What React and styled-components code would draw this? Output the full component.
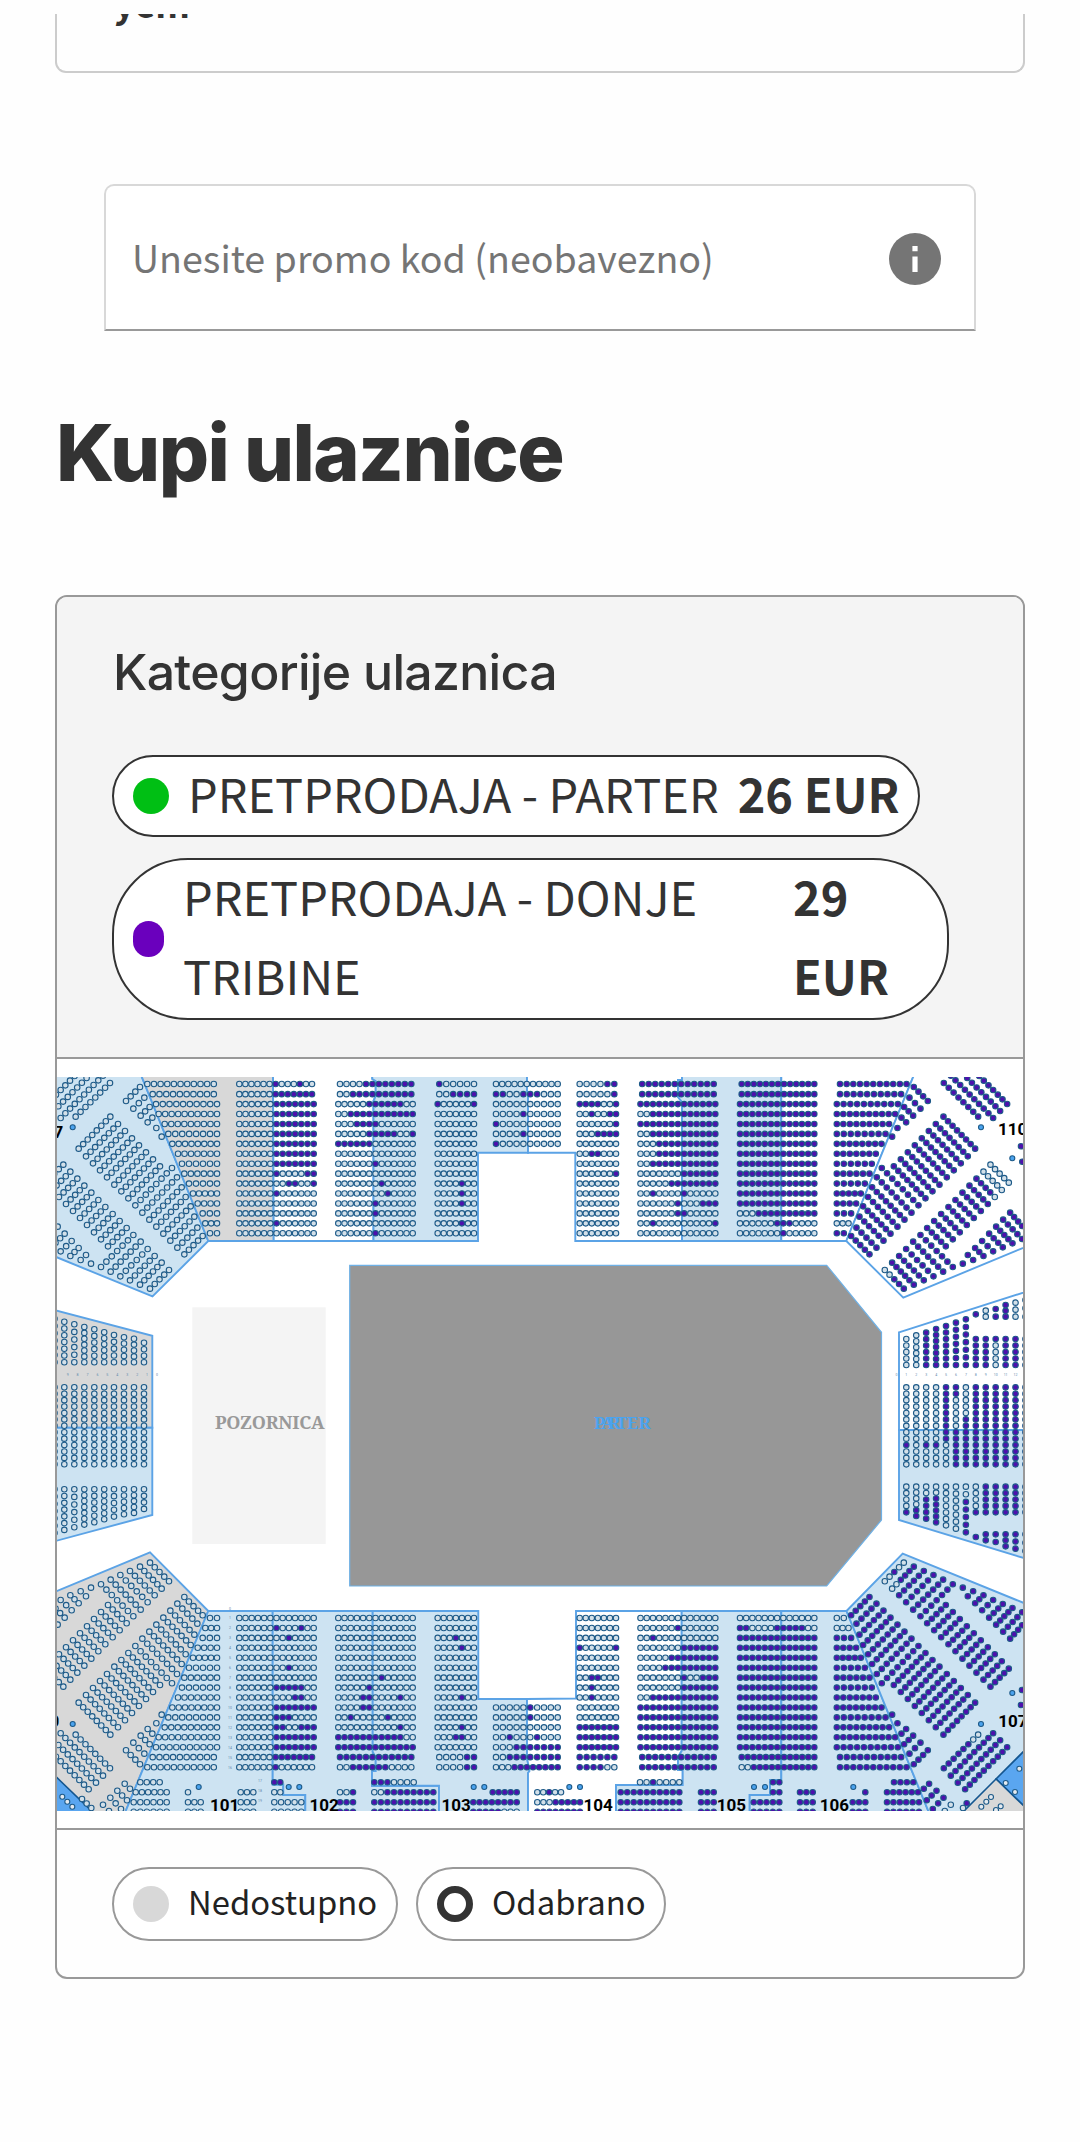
import React from "react";
import styled, { createGlobalStyle } from "styled-components";

const sans = `"Noto Sans CJK SC", "Noto Sans", sans-serif`;

// mirror axes of the arena (x sum and y sum of two mirrored points)
const AX = 1053.8;
const AY = 2851.3;
const ROW = 9.94;

const O = "o";
const X = "x";
const all = (c, n) => c.repeat(n);
// n open seats with the listed indexes taken
const at = (n, ...idx) =>
  Array.from({ length: n }, (_, i) => (idx.includes(i) ? X : O)).join("");

const line = (x1, y1, x2, y2, pattern) => {
  const n = pattern.length;
  return pattern.split("").map((c, i) => {
    const t = n > 1 ? i / (n - 1) : 0;
    return { x: x1 + (x2 - x1) * t, y: y1 + (y2 - y1) * t, on: c === X };
  });
};

// straight blocks, rows listed from the outer edge towards the floor
const o13 = all(O, 13);
const x13 = all(X, 13);
const x12 = all(X, 12);
const o7 = all(O, 7);
const x7 = all(X, 7);
const left = (p) => all(O, 6) + p;

const blocks = [
  {
    x: [239.3, 313.7],
    edge: [239.3, 312],
    top: [
      "xoooxoo", x7, x7, x7, x7, x7, x7, x7, x7, "xooooxx", "ooxxoox",
      "xoooooo", o7, o7, "xoooooo", o7,
    ].map(left),
    bottom: [
      "xoooooo", x7, x7, x7, "xxooxxx", "xxxoooo", x7, "oooxxoo", "xxxxxoo",
      o7, "ooxoooo", o7, o7, "ooxoooo", "xoooxoo", o7,
    ].map(left),
  },
  {
    x: [338.3, 412.7],
    edge: [340, 411.3],
    top: [
      "ooooxxxxxxxx", "ooxxxxxxxxxx", "oooooxxxxxxoo", "ooxxxxxxxxxxx",
      "oooxxxxoooooo", "oooooxxxxxoox", "xxxxxxooooooo", o13, at(13, 6), o13,
      at(13, 7), at(13, 8), at(13, 6), at(13, 6), o13, at(13, 6),
    ],
    bottom: [
      "ooxxxxxxoooo", x12, x13, "xxxxxxxxxxxoo", at(13, 10), at(13, 2, 8),
      at(13, 4, 5), at(13, 4, 5, 10), at(13, 5), at(13, 7), o13, o13, o13,
      o13, o13, o13,
    ],
  },
  {
    x: [437.7, 474],
    edge: [439.3, 474],
    top: [
      "xooooo", "ooxxxx", "xooooox", o7, o7, o7, o7, o7, o7, o7, at(7, 4),
      at(7, 4), at(7, 4), o7, at(7, 4), o7,
    ],
    bottom: [
      "ooooxx", "ooooxx", o7, at(7, 3, 4), at(7, 4), o7, o7, at(7, 4), o7, o7,
      o7, o7, at(7, 4), at(7, 3), o7, o7,
    ],
  },
  {
    x: [496, 557.7],
    edge: [496, 557.7],
    top: [
      all(O, 11), "xxooxxxooo", all(O, 10), at(10, 4), at(10, 0), at(10, 4),
      at(10, 0),
    ],
    bottom: [
      "oooxxxxxxxx", "ooxxxxxxxx", "oooxxxxxxx", at(10, 2, 6), all(O, 10),
      at(10, 5), at(10, 5),
    ],
  },
  {
    x: [579.7, 616],
    edge: [579.7, 614.3],
    top: [
      "ooooxx", "ooooox", "xxxxoox", "ooxooxx", "oooooox", "oooxxxx", o7,
      "ooxxooo", o7, "oooooox", o7, o7, o7, o7, o7, o7,
    ],
    bottom: [
      "xxxxoo", "xxxxxx", x7, x7, x7, o7, o7, "ooxoooo", "ooxoooo", "ooxxooo",
      o7, o7, "xooooox", o7, o7, o7,
    ],
  },
  {
    x: [640.5, 715.3],
    edge: [642.2, 713.7],
    top: [
      x12, x12, x13, "ooxxxxxxxxxxx", x13, "ooxxxxxxxxxxx", "oooxxxxxxxxxx",
      "oooxxxxxxxxxx", "ooxxxxxxxxxxx", "oooooooxxxxxx", "oooooxxxxxxxx",
      at(13, 2, 7), "ooooooxoooxxx", at(13, 6, 7), at(13, 2, 12), o13,
    ],
    bottom: [
      x12, x12, x13, x13, x13, x13, x13, "ooxxxxxxxxxxx", "oooooooxxxxxx",
      "oooooooxooxxx", "ooooxxxxxxxxx", "oooooxxxxxxxx", "oooooooxxxxxx",
      at(13, 2), at(13, 6), o13,
    ],
  },
  {
    x: [740, 814.3],
    edge: [741.7, 814.3],
    top: [
      x13, x13, x13, x13, x13, x13, x13, x13, x13, x13, x13, x13, x13,
      "oooxxxxxxxxxx", "ooooooxxxoooo", at(13, 7),
    ],
    bottom: [
      "ooxxxxxxxxxxx", x13, x13, x13, x13, x13, x13, x13, x13, x13, x13, x13,
      x13, x13, "xxooooxxxxxoo", o13,
    ],
  },
];

const seats = [];
const add = (...args) => seats.push(...line(...args));
const rowY = (i) => 1084 + i * ROW + (i > 0 ? 0.2 : 0);

blocks.forEach((b) => {
  ["top", "bottom"].forEach((side) => {
    b[side].forEach((pattern, i) => {
      const [x1, x2] = i < 2 ? b.edge : b.x;
      const y = side === "top" ? rowY(i) : AY - rowY(i);
      add(x1, y, x2, y, pattern);
    });
  });
});

// tapering blocks next to the corners: start x and seat count per row
const taper = [
  [147.3, 11], [152.7, 10], [156, 10], [158.7, 10], [164.7, 9], [168.3, 8],
  [172.3, 8], [178, 7], [182, 6], [184.3, 6], [189, 5], [193, 5], [197.7, 4],
  [202.7, 3], [205.3, 3], [210, 2],
];
taper.forEach(([x, n], i) => {
  const end = i < 2 ? 213.8 : 217;
  const y = rowY(i);
  add(x, y, end, y, all(O, n));
  add(x, AY - y, end, AY - y, all(O, n));
  add(AX - x, y, AX - end, y, all(i === 14 ? O : X, n));
  add(AX - x, AY - y, AX - end, AY - y, all(i > 13 ? O : X, n));
});

// outer rows cut by the lower edge of the map
const outer = [
  [1782.3, 140.3, 159.7, "oooo"],
  [1782.3, 274.3, 280.3, "xx"],
  [1782.3, 374.3, 413.7, "xxxoooo"],
  [1782.3, 640, 679.3, "ooxoooo"],
  [1782.3, 773, 779.3, "xx"],
  [1782.3, 894, 913.3, "xxxx"],
  [1792.3, 135.7, 166.7, "oooooo"],
  [1792.3, 188, 188, "o"],
  [1792.3, 240.7, 253.3, "ooo"],
  [1792.3, 274.3, 280.3, "oo"],
  [1792.3, 340, 353, "oox"],
  [1792.3, 374.3, 433.3, "ooxxxxxxxx"],
  [1792.3, 492.7, 516.7, "xxxxx"],
  [1792.3, 537.3, 561, "ooxoo"],
  [1792.3, 620.7, 679.3, "xxxxxxxxxx"],
  [1792.3, 701, 713.7, "xxx"],
  [1792.3, 773, 779.3, "xx"],
  [1792.3, 800, 812.7, "xxx"],
  [1792.3, 865.3, 865.3, "x"],
  [1792.3, 887, 918, "xxxxxx"],
];
[1802.3, 1811.8].forEach((y, i) => {
  outer.push(
    [y, 133.7, 166.7, "oooooo"],
    [y, 188, 200.7, "ooo"],
    [y, 240.7, 253.3, "ooo"],
    [y, 274.3, 301.3, "ooooo"],
    [y, 340, 353, "xxx"],
    [y, 374.3, 433.3, "xxxxxxxxxx"],
    [y, 473.3, 516.7, i ? "xxxxxooo" : "xxxxxxxx"],
    [y, 537.3, 580, i ? "xxxxxxxx" : "oooxxxxx"],
    [y, 620.7, 679.3, "xxxxxxxxxx"],
    [y, 701, 713.7, "xxx"],
    [y, 753.7, 779.3, "xxxxx"],
    [y, 800, 812.7, "xxx"],
    [y, 852.7, 865.3, "xxx"],
    [y, 887, 919, "xxxxxx"]
  );
});
outer.forEach(([y, x1, x2, p]) => add(x1, y, x2, y, p));

// corner rows, drawn in a grid three times finer than the map with its origin at 50,1060
// [x1, y1, x2, y2, count, pattern top right, pattern bottom right]
const corner = [
  [181, 170, 86, 266, 8], [204, 192, 108, 289, 8], [225, 213, 129, 310, 8],
  [246, 235, 150, 331, 8], [267, 256, 171, 352, 8], [288, 277, 193, 374, 8],
  [309, 298, 214, 394, 8], [330, 319, 235, 415, 8], [366, 324, 256, 436, 8],
  [381, 352, 277, 458, 8], [395, 382, 298, 479, 8], [407, 411, 319, 500, 7],
  [422, 439, 340, 521, 7], [433, 470, 361, 542, 6], [442, 503, 382, 563, 5],
  [458, 528, 403, 583, 5],
  [270, 81, 228, 123, 4], [283, 113, 250, 146, 3], [299, 141, 272, 167, 3],
  [307, 173, 293, 187, 2], [319, 204, 319, 204, 1], [335, 230, 335, 230, 1],
  [77, 170, 180, 69, 8, null, "ooxxxxxx"], [32, 174, 159, 47, 10],
  [11, 153, 138, 26, 10], [-10, 132, 116, 6, 10],
  [40, 314, -15, 368, 5, "ooooo"], [61, 335, 6, 390, 5, "ooooo"],
  [82, 356, 27, 411, 5, "xxxxo"], [103, 377, 48, 432, 5],
  [124, 398, 69, 453, 5], [145, 420, 90, 474, 5], [166, 441, 111, 495, 5],
  [188, 462, 132, 517, 5], [209, 483, 153, 538, 5], [230, 504, 174, 559, 5],
  [250, 525, 153, 621, 7], [272, 545, 182, 635, 7], [293, 567, 211, 649, 6],
  [314, 588, 240, 661, 6], [335, 608, 270, 674, 6, null, "ooxxxx"],
  [357, 630, 300, 686, 5, "ooxxx", "ooxoo"],
  [123, 611, 123, 611, 1], [108, 585, 92, 600, 2], [86, 564, 61, 588, 3],
  [65, 543, 32, 574, 3], [44, 521, 3, 562, 4], [23, 500, -26, 550, 5],
  [2, 479, -55, 537, 5], [-19, 458, -55, 498, 4],
];
corner.forEach(([x1, y1, x2, y2, n, tr, br]) => {
  const a = [50 + x1 / 3, 1060 + y1 / 3];
  const b = [50 + x2 / 3, 1060 + y2 / 3];
  add(a[0], a[1], b[0], b[1], all(O, n));
  add(a[0], AY - a[1], b[0], AY - b[1], all(O, n));
  add(AX - a[0], a[1], AX - b[0], b[1], tr || all(X, n));
  add(AX - a[0], AY - a[1], AX - b[0], AY - b[1], br || all(X, n));
});
[
  [124.7, 1783.7, 130, 1788.7, 2], [117.3, 1790.7, 127, 1800.3, 3],
  [110.3, 1797.7, 121, 1809, 3], [103, 1804.7, 109, 1811, 2],
].forEach(([x1, y1, x2, y2, n]) => {
  add(x1, y1, x2, y2, all(O, n));
  add(AX - x1, y1, AX - x2, y2, all(n === 2 && y1 > 1800 ? O : X, n));
});
add(82, 1799, 91.3, 1808, "ooo");
add(966.7, 1803.3, 963, 1808, "xo");
add(1021, 1146.3, 1022.3, 1161.7, "xx");
add(1022, 1690, 1021, 1705, "xx");

// end blocks, column by column
const leftCols = [
  [54.5, 1318.7, 7], [64.3, 1321.7, 7], [74.3, 1324.3, 6], [84.3, 1327, 7],
  [94.3, 1329.3, 6], [104.2, 1332.3, 6], [114, 1335, 5], [124, 1337.3, 5],
  [134, 1338.7, 5], [144, 1342.7, 4],
];
leftCols.forEach(([x, y, n]) => {
  add(x, y, x, 1362.3, all(O, n));
  add(x, 1387.3, x, 1464.3, o13);
  add(x, 1489.3, x, AY + 0.3 - y, all(O, n));
});

const rightCols = [
  ["ooooo", 147, at(13, 9), "oooox", 667],
  ["oooooo", 136, o13, "ooooxx", 678],
  ["xxxxxx", 128, at(13, 9), "ooxxxx", 686],
  ["xxxxxxx", 117, at(13, 9), "ooxxxxx", 697],
  ["xxxxxxx", 108, "xxxxxxxxxoooo", "ooooooo", 706],
  ["xxxxxxx", 98, "xxoooooxxxxxx", "ooooooo", 716],
  ["xxxxxxx", 88, "oooooxxxxxxxx", "ooxxxxx", 727],
  ["xxxxx", 147, x13, "oooox", 667, [73, 73, "x"], [741, 741, "x"]],
  ["xxxxx", 147, x13, "xxxxx", 667, [62, 80, "oo"], [733, 751, "xx"]],
  ["xoooo", 147, x13, "xxxxx", 667, [57, 80, "xx"], [733, 756, "xx"]],
  ["xxxxx", 147, x13, "xxxxx", 667, [45, 80, "xxx"], [733, 769, "xxx"]],
  ["xxxxx", 147, x13, "xxxxx", 667, [38, 80, "ooo"], [733, 776, "xxx"]],
  ["xxxxx", 147, x13, "xxxxx", 667, [30, 80, "ooo"], [733, 783, "xxx"]],
];
rightCols.forEach(([up, y1, mid, low, y2, ...extra], i) => {
  const x = 906.3 + i * 9.93;
  const y = (v) => 1290 + v / 3;
  add(x, y(y1), x, y(225), up);
  add(x, y(292), x, y(523), mid);
  add(x, y(590), x, y(y2), low);
  extra.forEach(([a, b, p]) => add(x, y(a), x, y(b), p));
});

const boxSeats = [
  [62.3, 1796.7], [67.3, 1801.7], [72.3, 1806.7], [991, 1797], [986.3, 1801.7],
  [981.3, 1806.7], [1000.7, 1806.3], [996, 1810], [1005.7, 1783],
  [1015, 1792], [1019.3, 1768.7],
];

const markers = [
  [72.7, 1127.3], [981, 1127.3], [1012.3, 1158.3], [72.7, 1724],
  [981, 1724], [1012.3, 1693], [198.7, 1787], [288.7, 1787], [299.3, 1787],
  [473.7, 1787], [484.3, 1787], [569.3, 1787], [580, 1787], [754, 1787],
  [765, 1787], [853.3, 1787],
];

const blue = "#cde3f2";
const grey = "#d8d8d8";
const sections = [
  ["50,1070 139,1070 208.3,1241 152.5,1296.5 50,1254.5", blue],
  ["139,1070 273,1070 273.7,1241 208.3,1241", grey],
  ["273,1070 372,1070 372.3,1079 375.7,1081 375.7,1096 373.5,1101 373.5,1241 273.7,1241", "#fff"],
  ["372,1070 527,1070 527,1090 528,1094 528,1152.7 478,1152.7 478,1241 373.5,1241 373.5,1101 375.7,1096 375.7,1081 372.3,1079", blue],
  ["527,1070 682,1070 682,1080 678,1080 678,1097 682,1102 682,1241 575.3,1241 575.3,1152.7 528,1152.7 528,1094 527,1090", "#fff"],
  ["682,1070 781.3,1070 781.3,1241 682,1241 682,1102 678,1097 678,1080 682,1080", blue],
  ["781.3,1070 916,1070 846.3,1241 781.3,1241", "#fff"],
  ["916,1070 1030,1070 1030,1245 903.3,1297.6 846.3,1241", "#fff"],
  ["50,1309 152.3,1335.8 152.3,1427.7 50,1427.7", grey],
  ["50,1427.7 152.3,1427.7 152.3,1515 50,1542.5", blue],
  ["899,1332.3 1030,1290.5 1030,1430 899,1430", "#fff"],
  ["899,1430 1030,1430 1030,1560 899,1520", blue],
  ["50,1594 150,1552.3 208.3,1611 122,1820 50,1820", grey],
  ["208.3,1611 272.7,1611 272.7,1784.5 283.3,1784.5 283.3,1795 305.3,1795 305.3,1820 122,1820", blue],
  ["272.7,1611 372.7,1611 372.7,1752 375.7,1757 375.7,1771 372,1771 372,1785.7 439,1785.7 439,1820 305.3,1820 305.3,1795 283.3,1795 283.3,1784.5 272.7,1784.5", blue],
  ["372.7,1611 478.3,1611 478.3,1699 527,1699 527,1758 529.5,1771 528,1773 528,1820 439,1820 439,1785.7 372,1785.7 372,1771 375.7,1771 375.7,1757 372.7,1752", blue],
  ["576,1611 681.7,1611 681.7,1751 678,1757 678,1770 682.7,1770 682.7,1785 616,1785 616,1820 528,1820 528,1773 529.5,1771 527,1758 527,1699 576,1698.5", "#fff"],
  ["681.7,1611 781.3,1611 781.3,1780 770,1780 770,1795 749.7,1795 749.7,1820 616,1820 616,1785 682.7,1785 682.7,1770 678,1770 678,1757 681.7,1751", blue],
  ["781.3,1611 846.5,1611 932,1820 749.7,1820 749.7,1795 770,1795 770,1780 781.3,1780", blue],
  ["846.5,1611 902.7,1553.6 1030,1605.5 1030,1820 932,1820", blue],
];

const labels = [
  [34, 1138, "117"], [998, 1134.8, "110"], [998.3, 1726.7, "107"],
  [30, 1726.7, "100"], [210, 1811.3, "101"], [309.5, 1811.3, "102"],
  [441.5, 1811.3, "103"], [583.5, 1811.3, "104"], [716.7, 1811.3, "105"],
  [819.7, 1811.3, "106"],
];

const ArenaMap = () => (
  <Map viewBox="57 1077 966 734" width="966" height="734">
    {sections.map(([points, fill]) => (
      <polygon key={points} points={points} fill={fill} stroke="#5ba3e6" strokeWidth="1.9" />
    ))}
    <g stroke="#14568f" strokeWidth="1.6">
      <polygon points="50,1771 101,1820 50,1820" fill="#5aa6f0" />
      <polygon points="1030,1745 996,1779 1030,1812" fill="#5aa6f0" />
      <polygon points="996,1779 955,1820 1030,1820 1030,1812" fill={grey} />
    </g>
    <rect x="192.3" y="1307.3" width="133.4" height="236.7" fill="#f4f4f4" />
    <StageText x="215" y="1428.7" textLength="109.5">POZORNICA</StageText>
    <polygon
      points="349.7,1265.3 826.7,1265.3 881.5,1332.3 881.5,1520 826.7,1586 349.7,1586"
      fill="#979797"
      stroke="#6fb1e6"
      strokeWidth="1.2"
    />
    <FloorText x="594 601 608 616 627 638.5" y="1429.3">PARTER</FloorText>
    <g stroke="#1d5a88" strokeWidth="1.1">
      {seats.map((s, i) => (
        <circle key={i} cx={s.x} cy={s.y} r="2.75" fill={s.on ? "#4d10ad" : "#d3e0e9"} />
      ))}
      {boxSeats.map(([x, y]) => (
        <circle key={x} cx={x} cy={y} r="2.5" fill="#e4eaf0" />
      ))}
      {markers.map(([x, y]) => (
        <circle key={`${x}-${y}`} cx={x} cy={y} r="2.5" fill="#4ba3ee" />
      ))}
    </g>
    {Array.from({ length: 17 }, (_, i) => (
      <RowText key={i} x="230" y={1609.5 + i * ROW}>{i}</RowText>
    ))}
    {[17, 18, 19].map((n, i) => (
      <RowText key={n} x="260" y={1781.5 + i * 10}>{n}</RowText>
    ))}
    {Array.from({ length: 10 }, (_, i) => (
      <RowText key={i} x={157 - i * 9.93} y="1375.7">{i}</RowText>
    ))}
    {Array.from({ length: 13 }, (_, i) => (
      <RowText key={i} x={896.4 + i * 9.93} y="1375.7">{i}</RowText>
    ))}
    {labels.map(([x, y, text]) => (
      <SectionText key={text} x={x} y={y}>{text}</SectionText>
    ))}
  </Map>
);

export default function App() {
  return (
    <Page>
      <GlobalStyle />
      <Notice>
        <p>yem</p>
      </Notice>
      <PromoField>
        <span>Unesite promo kod (neobavezno)</span>
        <svg viewBox="0 0 52 52" width="52" height="52">
          <circle cx="26" cy="26" r="26" fill="#757575" />
          <path d="M23.4 13h5.2v5.2h-5.2zM23.4 23.4h5.2V39h-5.2z" fill="#fff" />
        </svg>
      </PromoField>
      <Heading>Kupi ulaznice</Heading>
      <Panel>
        <Categories>
          <h2>Kategorije ulaznica</h2>
          <Category>
            <Dot $color="#00bf14" />
            <span>PRETPRODAJA - PARTER</span>
            <strong>26 EUR</strong>
          </Category>
          <Category $wide>
            <Dot $color="#6a00bd" $width={31} />
            <span>PRETPRODAJA - DONJE TRIBINE</span>
            <strong>29 EUR</strong>
          </Category>
        </Categories>
        <MapArea>
          <ArenaMap />
        </MapArea>
        <Legend>
          <LegendItem $width={286}>
            <Dot $color="#d8d8d8" />
            <span>Nedostupno</span>
          </LegendItem>
          <LegendItem $width={250}>
            <Ring />
            <span>Odabrano</span>
          </LegendItem>
        </Legend>
      </Panel>
    </Page>
  );
}

const GlobalStyle = createGlobalStyle`
  * {
    box-sizing: border-box;
  }
  body {
    margin: 0;
    background: #fefefe;
    color: #333;
    font-family: ${sans};
  }
  h1, h2, p {
    margin: 0;
  }
`;
const Page = styled.main`
  display: flex;
  flex-direction: column;
  height: 2142px;
  padding: 14px 55px 0;
  overflow: hidden;
`;
const Notice = styled.section`
  height: 59px;
  flex-shrink: 0;
  padding: 0 57px;
  border: 2px solid #ccc;
  border-top: none;
  border-radius: 0 0 11px 11px;
  overflow: hidden;
  p {
    margin-top: -48px;
    font-size: 36px;
    font-weight: 700;
    line-height: 72px;
  }
`;
const PromoField = styled.div`
  display: flex;
  align-items: center;
  justify-content: space-between;
  height: 147px;
  flex-shrink: 0;
  margin: 111px 49px 0;
  padding: 3px 33px 0 26px;
  border: 2px solid #d8d8d8;
  border-bottom-color: #999;
  border-radius: 10px 10px 0 0;
  background: #fff;
  color: #757575;
  font-size: 37.6px;
  span {
    padding-bottom: 5px;
  }
`;
const Heading = styled.h1`
  margin: 61px 0 83px;
  padding-left: 1px;
  font-family: Inter, sans-serif;
  font-size: 79px;
  font-weight: 800;
  line-height: 120px;
  letter-spacing: -1.6px;
  white-space: nowrap;
`;
const Panel = styled.section`
  display: flex;
  flex-direction: column;
  height: 1384px;
  flex-shrink: 0;
  border: 2px solid #999;
  border-radius: 12px;
  overflow: hidden;
`;
const Categories = styled.div`
  display: flex;
  flex-direction: column;
  align-items: flex-start;
  height: 462px;
  flex-shrink: 0;
  padding: 39px 55px 0;
  border-bottom: 2px solid #999;
  background: #f4f4f4;
  h2 {
    height: 119px;
    padding-left: 1px;
    font-family: Inter, sans-serif;
    font-size: 50px;
    font-weight: 500;
    line-height: 72px;
    letter-spacing: -0.7px;
  }
`;
const Category = styled.div`
  display: flex;
  align-items: center;
  gap: 19px;
  width: ${({ $wide }) => ($wide ? 837 : 808)}px;
  height: ${({ $wide }) => ($wide ? 162 : 82)}px;
  margin-bottom: 21px;
  padding: 0 19px;
  border: 2px solid #333;
  border-radius: 76px;
  background: #fff;
  font-size: 46.9px;
  line-height: 79px;
  span {
    width: ${({ $wide }) => ($wide ? "591px" : "auto")};
    white-space: ${({ $wide }) => ($wide ? "normal" : "nowrap")};
    padding-bottom: 6px;
  }
  strong {
    white-space: ${({ $wide }) => ($wide ? "normal" : "nowrap")};
    width: ${({ $wide }) => ($wide ? "110px" : "auto")};
    padding-bottom: 6px;
  }
`;
const Dot = styled.i`
  width: ${({ $width = 36 }) => $width}px;
  height: 36px;
  flex-shrink: 0;
  border-radius: 18px;
  background: ${({ $color }) => $color};
`;
const Ring = styled.i`
  width: 36px;
  height: 36px;
  flex-shrink: 0;
  border: 7px solid #333;
  border-radius: 50%;
`;
const MapArea = styled.div`
  height: 769px;
  flex-shrink: 0;
  padding-top: 18px;
  background: #fff;
`;
const Map = styled.svg`
  display: block;
`;
const StageText = styled.text`
  fill: #999;
  font: 700 18px "Noto Serif", "Liberation Serif", serif;
`;
const FloorText = styled.text`
  fill: #4ba3ee;
  font: 700 17px "Noto Serif", "Liberation Serif", serif;
`;
const SectionText = styled.text`
  fill: #000;
  font: 700 17px Roboto, sans-serif;
`;
const RowText = styled.text`
  fill: #5f8aad;
  font: 3.5px Roboto, sans-serif;
  text-anchor: middle;
`;
const Legend = styled.div`
  display: flex;
  gap: 18px;
  flex: 1;
  padding: 37px 55px 0;
  border-top: 2px solid #999;
`;
const LegendItem = styled.div`
  display: flex;
  align-items: center;
  gap: 19px;
  width: ${({ $width }) => $width}px;
  height: 74px;
  padding: 0 19px;
  border: 2px solid #999;
  border-radius: 37px;
  background: #fff;
  color: #222;
  font-size: 32.8px;
  line-height: 66px;
  span {
    padding-bottom: 6px;
  }
`;
